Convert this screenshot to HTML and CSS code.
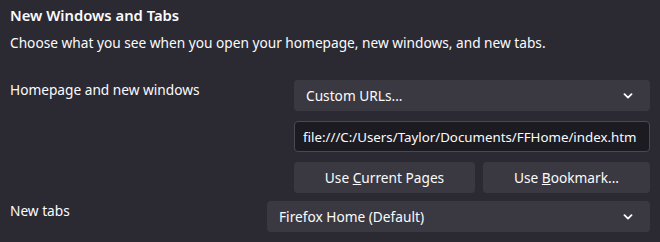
FILE: index.html
```html
<!DOCTYPE html>
<html lang="en">
<head>
    <meta charset="UTF-8">
    <title>Preferences | Home</title>
    <link rel="stylesheet" href="styles.css">
</head>
<body>
    <section class="pane">
        <h2 class="pane-title">New Windows and Tabs</h2>
        <p class="pane-desc">Choose what you see when you open your homepage, new windows, and new tabs.</p>

        <div class="row">
            <label class="row-label">Homepage and new windows</label>
            <div class="controls">
                <div class="dropdown">
                    <span>Custom URLs...</span>
                    <svg class="chevron" width="10" height="6" viewBox="0 0 10 6"><path d="M1.5 1.2 L5 4.6 L8.5 1.2" fill="none" stroke="#fbfbfe" stroke-width="1.8" stroke-linecap="round" stroke-linejoin="round"/></svg>
                </div>
                <input class="url-input" type="text" value="file:///C:/Users/Taylor/Documents/FFHome/index.htm">
                <div class="btn-row">
                    <button class="btn">Use <u>C</u>urrent Pages</button>
                    <button class="btn btn-narrow">Use <u>B</u>ookmark...</button>
                </div>
            </div>
        </div>

        <div class="row row-tabs">
            <label class="row-label">New tabs</label>
            <div class="dropdown dropdown-wide">
                <span>Firefox Home (Default)</span>
                <svg class="chevron" width="10" height="6" viewBox="0 0 10 6"><path d="M1.5 1.2 L5 4.6 L8.5 1.2" fill="none" stroke="#fbfbfe" stroke-width="1.8" stroke-linecap="round" stroke-linejoin="round"/></svg>
            </div>
        </div>
    </section>
</body>
</html>
```

FILE: styles.css
```css
body {
    margin: 0;
    background: #2b2a33;
    color: #fbfbfe;
    font-family: 'Noto Sans', sans-serif;
    font-size: 13.7px;
}

.pane {
    padding: 5px 10px 0 10px;
}

.pane-title {
    margin: 0;
    font-size: 14.8px;
    font-weight: 600;
    line-height: 20px;
}

.pane-desc {
    margin: 8px 0 0 0;
    line-height: 20px;
}

.row {
    display: flex;
    justify-content: space-between;
    margin-top: 27px;
}

.row-label {
    line-height: 20px;
}

.controls {
    width: 356px;
    display: flex;
    flex-direction: column;
    gap: 10px;
}

.dropdown {
    height: 31px;
    box-sizing: border-box;
    background: #3a3941;
    border-radius: 4px;
    display: flex;
    align-items: center;
    justify-content: space-between;
    padding: 0 17px 0 12px;
}

.dropdown-wide {
    width: 383px;
}

.url-input {
    height: 31px;
    box-sizing: border-box;
    background: #1c1b22;
    border: 1px solid #4a4951;
    border-radius: 4px;
    color: #fbfbfe;
    font-family: inherit;
    font-size: 13.3px;
    padding: 0 6px 0 8px;
    outline: none;
}

.btn-row {
    display: flex;
    gap: 8px;
}

.btn {
    height: 31px;
    flex: 1;
    background: #3a3941;
    border: none;
    border-radius: 4px;
    color: #fbfbfe;
    font-family: inherit;
    font-size: 13.7px;
}

.btn-narrow {
    flex: 0 0 167px;
}

.row-tabs {
    margin-top: 8px;
}
```
